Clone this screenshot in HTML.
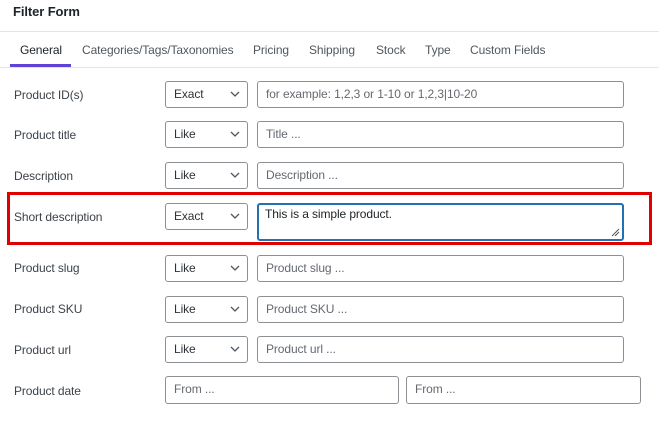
<!DOCTYPE html>
<html><head><meta charset="utf-8"><style>
*{box-sizing:border-box;margin:0;padding:0}
body{width:659px;height:435px;background:#fff;font-family:"Segoe UI","Liberation Sans",sans-serif;font-size:12px;letter-spacing:-0.1px;color:#3c434a;position:relative;overflow:hidden}
.a{position:absolute}
.title{left:13px;top:4px;font-size:13px;font-weight:bold;color:#1d2327}
.hl{left:0;width:659px;height:1px;background:#e2e4e7}
.tab{top:43px;font-size:12px;color:#50575e}
.lbl{left:14px;color:#3c434a}
.sel{left:165px;width:83px;height:27px;border:1px solid #8c8f94;border-radius:3px;padding-left:8px;line-height:25px;color:#2c3338}
.sel svg{position:absolute;right:7px;top:9px}
.inp{left:257px;width:367px;height:27px;border:1px solid #8c8f94;border-radius:3px;padding-left:8px;line-height:25px;color:#646970}
</style></head><body>
<div class="a title">Filter Form</div>
<div class="a hl" style="top:31px"></div>
<div class="a tab" style="left:20px;color:#1d2327">General</div>
<div class="a tab" style="left:82px">Categories/Tags/Taxonomies</div>
<div class="a tab" style="left:253px">Pricing</div>
<div class="a tab" style="left:309px">Shipping</div>
<div class="a tab" style="left:376px">Stock</div>
<div class="a tab" style="left:425px">Type</div>
<div class="a tab" style="left:470px">Custom Fields</div>
<div class="a" style="left:10px;top:64px;width:61px;height:3px;background:#6142d8"></div>
<div class="a hl" style="top:67px"></div>

<div class="a lbl" style="top:88px">Product ID(s)</div>
<div class="a sel" style="top:81px">Exact<svg width="10" height="6"><path d="M1 1l4 4 4-4" stroke="#50575e" fill="none" stroke-width="1.3"/></svg></div>
<div class="a inp" style="top:81px">for example: 1,2,3 or 1-10 or 1,2,3|10-20</div>

<div class="a lbl" style="top:128px">Product title</div>
<div class="a sel" style="top:121px">Like<svg width="10" height="6"><path d="M1 1l4 4 4-4" stroke="#50575e" fill="none" stroke-width="1.3"/></svg></div>
<div class="a inp" style="top:121px">Title ...</div>

<div class="a lbl" style="top:169px">Description</div>
<div class="a sel" style="top:162px">Like<svg width="10" height="6"><path d="M1 1l4 4 4-4" stroke="#50575e" fill="none" stroke-width="1.3"/></svg></div>
<div class="a inp" style="top:162px">Description ...</div>

<div class="a" style="left:7px;top:192px;width:645px;height:53px;border:3px solid #e00000"></div>
<div class="a lbl" style="top:210px">Short description</div>
<div class="a sel" style="top:203px">Exact<svg width="10" height="6"><path d="M1 1l4 4 4-4" stroke="#50575e" fill="none" stroke-width="1.3"/></svg></div>
<div class="a inp" style="top:203px;height:38px;border:2px solid #2271b1;line-height:18px;padding-left:6px;color:#1d2327">This is a simple product.<svg class="a" style="right:2px;bottom:2px" width="9" height="9"><path d="M1 8L8 1M4 8L8 4" stroke="#50575e" stroke-width="1"/></svg></div>

<div class="a lbl" style="top:261px">Product slug</div>
<div class="a sel" style="top:255px">Like<svg width="10" height="6"><path d="M1 1l4 4 4-4" stroke="#50575e" fill="none" stroke-width="1.3"/></svg></div>
<div class="a inp" style="top:255px">Product slug ...</div>

<div class="a lbl" style="top:302px">Product SKU</div>
<div class="a sel" style="top:296px">Like<svg width="10" height="6"><path d="M1 1l4 4 4-4" stroke="#50575e" fill="none" stroke-width="1.3"/></svg></div>
<div class="a inp" style="top:296px">Product SKU ...</div>

<div class="a lbl" style="top:343px">Product url</div>
<div class="a sel" style="top:336px">Like<svg width="10" height="6"><path d="M1 1l4 4 4-4" stroke="#50575e" fill="none" stroke-width="1.3"/></svg></div>
<div class="a inp" style="top:336px">Product url ...</div>

<div class="a lbl" style="top:384px">Product date</div>
<div class="a inp" style="top:376px;left:165px;width:234px;height:28px">From ...</div>
<div class="a inp" style="top:376px;left:406px;width:235px;height:28px">From ...</div>
</body></html>
